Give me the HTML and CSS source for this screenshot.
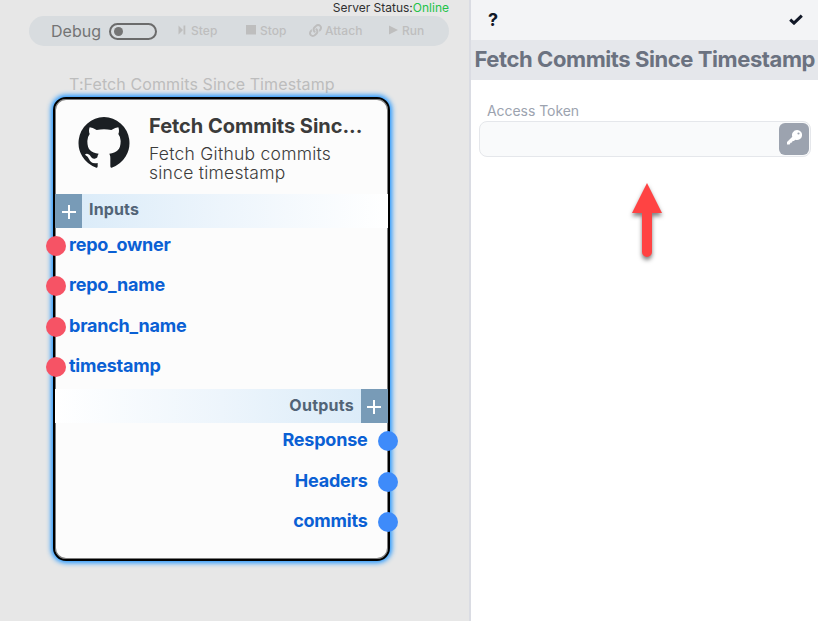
FILE: index.html
```html
<!DOCTYPE html>
<html lang="en">
<head>
<meta charset="utf-8">
<title>Flow editor</title>
<link rel="stylesheet" href="styles.css">
</head>
<body>
<div class="app">
  <main class="canvas">
    <div class="status"><span>Server Status:</span><span class="online">Online</span></div>
    <div class="toolbar">
      <span class="debug">Debug</span>
      <span class="toggle"></span>
      <span class="tool step"><svg width="8" height="10" viewBox="0 0 8 10"><path d="M0.5 0.5 5 5 0.5 9.5zM5.5 0.5h1.8v9H5.5z"/></svg><span>Step</span></span>
      <span class="tool stop"><svg width="10" height="10" viewBox="0 0 10 10"><path d="M0 0h10v9.5H0z"/></svg><span>Stop</span></span>
      <span class="tool attach"><svg width="13" height="13" viewBox="0 0 512 512"><path d="M326.612 185.391c59.747 59.809 58.927 155.698.36 214.59-.11.12-.24.25-.36.37l-67.2 67.2c-59.27 59.27-155.699 59.262-214.96 0-59.27-59.26-59.27-155.7 0-214.96l37.106-37.106c9.84-9.84 26.786-3.3 27.294 10.606.648 17.722 3.826 35.527 9.69 52.721 1.986 5.822.567 12.262-3.783 16.612l-13.087 13.087c-28.026 28.026-28.905 73.66-1.155 101.96 28.024 28.579 74.086 28.749 102.325.51l67.2-67.19c28.191-28.191 28.073-73.757 0-101.83-3.701-3.694-7.429-6.564-10.341-8.569a16.037 16.037 0 0 1-6.947-12.606c-.396-10.567 3.348-21.456 11.698-29.806l21.054-21.055c5.521-5.521 14.182-6.199 20.584-1.731a152.482 152.482 0 0 1 20.522 17.197zM467.547 44.449c-59.261-59.262-155.69-59.27-214.96 0l-67.2 67.2c-.12.12-.25.25-.36.37-58.566 58.892-59.387 154.781.36 214.59a152.454 152.454 0 0 0 20.521 17.196c6.402 4.468 15.064 3.789 20.584-1.731l21.054-21.055c8.35-8.35 12.094-19.239 11.698-29.806a16.037 16.037 0 0 0-6.947-12.606c-2.912-2.005-6.64-4.875-10.341-8.569-28.073-28.073-28.191-73.639 0-101.83l67.2-67.19c28.239-28.239 74.3-28.069 102.325.51 27.75 28.3 26.872 73.934-1.155 101.96l-13.087 13.087c-4.35 4.35-5.769 10.79-3.783 16.612 5.864 17.194 9.042 34.999 9.69 52.721.509 13.906 17.454 20.446 27.294 10.606l37.106-37.106c59.271-59.259 59.271-155.699.001-214.959z"/></svg><span>Attach</span></span>
      <span class="tool run"><svg width="9" height="10" viewBox="0 0 9 10"><path d="M0 0.5 9 5 0 9.5z"/></svg><span>Run</span></span>
    </div>

    <div class="node-label">T:Fetch Commits Since Timestamp</div>
    <section class="node">
      <header class="node-head">
        <svg class="logo" width="52" height="51" viewBox="0 0 156 153"><path d="M78 0A78 78 0 0 0 55 152Q59 153 59 148V138C43 141 37 135 33 126Q30 119 22 114Q20 110 27 110C40 112 37 126 50 125Q57 124 58 121Q59 114 62 110C39 107 28 99 28 72Q28 60 35 51Q31 41 35 31Q43 31 56 39Q78 34 100 39Q113 31 121 31Q125 41 121 51Q128 60 128 72C128 99 116 107 94 110Q97 115 97 124V148Q97 153 101 152A78 78 0 0 0 78 0z"/></svg>
        <div class="node-text">
          <h2>Fetch Commits Sinc...</h2>
          <p>Fetch Github commits<br>since timestamp</p>
        </div>
      </header>
      <div class="bar inputs"><span class="plus"></span><span class="bar-name">Inputs</span></div>
      <ul class="ports in">
        <li><i></i><span>repo_owner</span></li>
        <li><i></i><span>repo_name</span></li>
        <li><i></i><span>branch_name</span></li>
        <li><i></i><span>timestamp</span></li>
      </ul>
      <div class="bar outputs"><span class="bar-name">Outputs</span><span class="plus"></span></div>
      <ul class="ports out">
        <li><span>Response</span><i></i></li>
        <li><span>Headers</span><i></i></li>
        <li><span>commits</span><i></i></li>
      </ul>
    </section>
  </main>

  <aside class="panel">
    <div class="panel-top">
      <span class="help">?</span>
      <svg width="14" height="11" viewBox="0 0 14 11"><path d="M1.2 5.6 5 9.1 12.8 1.6" fill="none" stroke="#111827" stroke-width="3"/></svg>
    </div>
    <h1>Fetch Commits Since Timestamp</h1>
    <div class="field">
      <label for="token">Access Token</label>
      <div class="input-wrap">
        <input id="token" type="text">
        <button type="button" aria-label="Key"><svg width="15" height="15" viewBox="0 0 15 15"><path fill="#fff" fill-rule="evenodd" d="M10 0a5 5 0 1 1-1.6 9.7L6.8 11 5.6 11.1 5 12.5 3.6 12.8 2.6 14.5H0V12L5.3 6.7A5 5 0 0 1 10 0zM11.5 2.4a1.1 1.1 0 1 0 0 2.2 1.1 1.1 0 0 0 0-2.2z"/></svg></button>
      </div>
    </div>
    <svg class="arrow" width="50" height="95" viewBox="0 0 50 95"><path fill="#ff4343" d="M25 8 40 38H30V77a5 5 0 0 1-10 0V38H10z"/></svg>
  </aside>
</div>
</body>
</html>
```

FILE: styles.css
```css
* { box-sizing: border-box; }
body { margin: 0; font-family: Inter, "Liberation Sans", sans-serif; }
h1, h2, p, ul { margin: 0; padding: 0; }
svg { display: block; flex: none; }
.app { display: flex; width: 818px; height: 621px; overflow: hidden; }

.canvas { position: relative; width: 469px; background: #e7e7e7; }
.status { display: flex; justify-content: flex-end; height: 16px; padding-right: 20px; font-size: 12px; line-height: 16px; color: #303030; }
.online { color: #22c348; }
.toolbar { display: flex; align-items: center; width: 420px; height: 30px; margin-left: 29px; padding-left: 22px; border-radius: 15px; background: #d8dcdf; white-space: nowrap; }
.debug { width: 58px; font-size: 16px; line-height: 28px; color: #747474; }
.toggle { width: 48px; height: 17px; padding: 2px; border: 2px solid #6b6b6b; border-radius: 9px; }
.toggle::before { content: ""; display: block; width: 9px; height: 9px; margin-left: 1px; border-radius: 50%; background: #757575; }
.tool { display: flex; align-items: center; font-size: 12px; font-weight: 500; color: #bebebe; }
.tool svg { position: relative; top: -1px; fill: #bebebe; }
.tool span { position: relative; top: -1px; letter-spacing: .05px; }
.step { width: 68px; margin-left: 21px; gap: 5px; }
.stop { width: 63px; gap: 4px; }
.attach { width: 80px; gap: 3px; }
.run { gap: 4px; }

.node-label { position: absolute; left: 69px; top: 74px; font-size: 16px; line-height: 20px; letter-spacing: .1px; color: #bdbdbd; white-space: nowrap; }
.node { position: absolute; left: 53px; top: 97px; width: 337px; height: 464px; border: 2px solid #000; border-radius: 13px; background: #fcfcfc; box-shadow: inset 0 0 0 1px rgba(0,0,0,.5), 0 0 5px 2px #2196ff; }
.node-head { display: flex; height: 95px; padding: 18px 0 0 22.5px; }
.logo { fill: #1b1f23; }
.node-text { margin: -3px 0 0 19.5px; color: #3b3b3b; white-space: nowrap; }
.node-text h2 { font-size: 20px; line-height: 24px; font-weight: 700; letter-spacing: -.03px; }
.node-text p { margin-top: 6px; font-size: 17.5px; line-height: 19px; font-weight: 300; letter-spacing: .25px; }
.bar { display: flex; width: 333px; height: 34px; }
.inputs { background: linear-gradient(90deg, #d8eaf8, #edf5fc 50%, #fff); }
.outputs { justify-content: flex-end; margin-top: 163px; background: linear-gradient(270deg, #d8eaf8, #edf5fc 50%, #fff); }
.plus { width: 27px; height: 34px; background: linear-gradient(#fff, #fff) 7px 17px / 14px 2px no-repeat, linear-gradient(#fff, #fff) 13px 11px / 2px 14px no-repeat, #789bb7; }
.outputs .plus { background-position: 6px 17px, 12px 11px; }
.bar-name { padding: 0 7px; font-size: 16px; line-height: 31px; font-weight: 700; letter-spacing: .15px; color: #526477; }
.outputs .bar-name { line-height: 33px; letter-spacing: .25px; }
.ports { display: grid; grid-auto-rows: 40.4px; list-style: none; }
.ports li { display: flex; align-items: center; font-size: 18px; font-weight: 700; line-height: 22px; letter-spacing: -.22px; color: #0a60d4; }
.ports i { width: 20px; height: 20px; border-radius: 50%; flex: none; }
.ports span { position: relative; top: -1px; }
.in { height: 0; margin-top: -2.1px; margin-bottom: 2.1px; }
.in li { margin-left: -9px; gap: 3px; }
.in i { background: #f65365; }
.out { margin-top: -1.7px; }
.out li { justify-content: flex-end; margin-right: -10px; gap: 10.5px; }
.out i { background: #3e8bfa; }

.panel { width: 349px; border-left: 2px solid #dadce3; background: #fff; }
.panel-top { display: flex; justify-content: space-between; align-items: center; height: 40px; padding: 0 15px 2px 17px; background: #f3f4f6; }
.help { font-size: 18px; font-weight: 700; color: #111827; }
.panel h1 { height: 40px; padding-left: 3.5px; background: #e5e7eb; color: #6b7280; font-size: 22px; line-height: 39px; font-weight: 700; letter-spacing: -.42px; white-space: nowrap; }
.field { padding: 22px 7px 0 8px; }
.field label { display: block; height: 19px; padding-left: 8px; font-size: 14px; line-height: 18px; letter-spacing: -.05px; color: #9ca3af; }
.input-wrap { display: flex; width: 332px; height: 36px; padding: 1px; border: 1px solid #e5e7eb; border-radius: 8px; background: #f9fafb; }
.input-wrap input { flex: 1; min-width: 0; border: 0; background: transparent; outline: 0; }
.input-wrap button { display: flex; justify-content: center; width: 30px; height: 32px; padding: 7px 0 0; border: 0; border-radius: 6px; background: #9ca3af; }
.arrow { margin: 18px 0 0 151px; filter: drop-shadow(0 3px 2px rgba(0,0,0,.5)); }
```
